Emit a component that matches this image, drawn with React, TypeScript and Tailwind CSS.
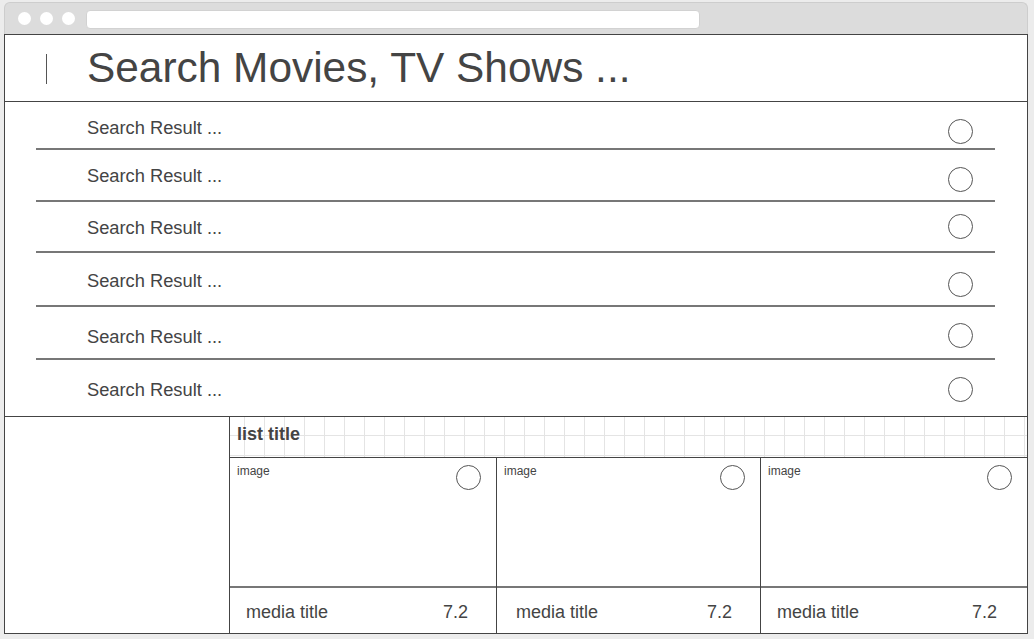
import React from 'react'

const font = { fontFamily: '"Liberation Sans", Arial, sans-serif' }

interface ResultRow {
  rowClass: string
  textClass: string
  circleClass: string
}

const rows: ResultRow[] = [
  { rowClass: 'h-[48px]', textClass: 'mt-[6px]', circleClass: 'mt-[12px]' },
  { rowClass: 'h-[52px]', textClass: 'mt-[2px]', circleClass: 'mt-[8px]' },
  { rowClass: 'h-[51px]', textClass: 'mt-[3px]', circleClass: 'mt-[-1px]' },
  { rowClass: 'h-[54px]', textClass: 'mt-[4px]', circleClass: 'mt-[10px]' },
  { rowClass: 'h-[53px]', textClass: 'mt-[8px]', circleClass: 'mt-[6px]' },
  { rowClass: 'h-[56px]', textClass: 'mt-[3px]', circleClass: 'mt-[3px]' }
]

const Circle = ({ className = '' }: { className?: string }) => (
  <div
    className={`w-[25px] h-[25px] rounded-full border border-[#555] shrink-0 ${className}`}
  />
)

const MediaCard = ({
  className,
  last,
  padClass
}: {
  className: string
  last?: boolean
  padClass: string
}) => (
  <div
    className={`${className} flex flex-col ${last ? '' : 'border-r border-[#444]'}`}
  >
    <div className="h-[128px] flex justify-between pl-[7px] pr-[15px] pt-[6px]">
      <span className="text-[12px] leading-[14px] text-[#444]">image</span>
      <Circle className="mt-[1px]" />
    </div>
    <div className="h-[2px] bg-[#777]" />
    <div className={`flex-1 flex items-center justify-between ${padClass}`}>
      <span className="text-[18px] text-[#444] mt-[3px]">media title</span>
      <span className="text-[18px] text-[#444] mt-[3px]">7.2</span>
    </div>
  </div>
)

const App = () => {
  return (
    <div
      className="w-[1034px] h-[639px] bg-[#ececec] pt-[2px] pl-[4px] pr-[6px] overflow-hidden"
      style={font}
    >
      {/* browser chrome */}
      <div className="h-[32px] rounded-t-[6px] bg-[#dcdcdc] border border-b-0 border-[#cdcdcd] flex items-center pl-[13px] pr-[327px]">
        <div className="w-[13px] h-[13px] rounded-full bg-white" />
        <div className="w-[13px] h-[13px] rounded-full bg-white ml-[9px]" />
        <div className="w-[13px] h-[13px] rounded-full bg-white ml-[9px]" />
        <div className="flex-1 h-[19px] rounded-[4px] bg-white border border-[#d2d2d2] ml-[11px] mt-[1px]" />
      </div>

      {/* window */}
      <div className="h-[600px] bg-white border border-[#444] flex flex-col">
        <div className="h-[67px] shrink-0 border-b border-[#444] flex items-center">
          <div className="w-[1px] h-[30px] bg-[#555] ml-[41px] mt-[1px]" />
          <span className="ml-[40px] text-[42.4px] leading-none text-[#444] mt-[1px]">
            Search Movies, TV Shows ...
          </span>
        </div>

        <div className="flex flex-col pl-[31px] pr-[32px]">
          {rows.map((r, i) => (
            <div
              key={i}
              className={`${r.rowClass} flex items-center justify-between pl-[51px] pr-[22px] ${
                i < rows.length - 1 ? 'border-b-2 border-[#777]' : ''
              }`}
            >
              <span className={`text-[18.3px] text-[#444] ${r.textClass}`}>
                Search Result ...
              </span>
              <Circle className={r.circleClass} />
            </div>
          ))}
        </div>

        <div className="flex-1 flex border-t border-[#444]">
          <div className="w-[225px] shrink-0 border-r border-[#444]" />
          <div className="flex-1 flex flex-col">
            <div className="h-[41px] shrink-0 border-b border-[#444] flex items-center pl-[7px] bg-[linear-gradient(to_right,#e4e4e4_1px,transparent_1px),linear-gradient(to_bottom,#e4e4e4_1px,transparent_1px)] bg-size-[20px_20px] bg-position-[14px_18px]">
              <span className="text-[18px] font-bold text-[#444] mt-[-5px]">list title</span>
            </div>
            <div className="flex-1 flex">
              <MediaCard className="w-[267px]" padClass="pl-[16px] pr-[28px]" />
              <MediaCard className="w-[264px]" padClass="pl-[19px] pr-[28px]" />
              <MediaCard className="flex-1" padClass="pl-[16px] pr-[30px]" last />
            </div>
          </div>
        </div>
      </div>
    </div>
  )
}

export default App
